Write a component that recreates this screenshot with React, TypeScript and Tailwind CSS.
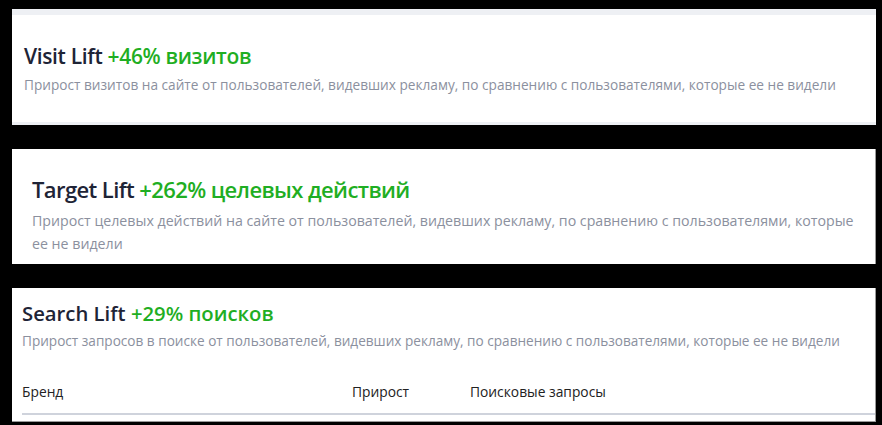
const font = { fontFamily: '"Open Sans", "Noto Sans", sans-serif' };

function LiftCard({ name, value, text }: { name: string; value: string; text: string }) {
  return (
    <>
      <h2 className="text-[21px] leading-[28px] font-semibold tracking-[-0.35px] text-[#1e2436]">
        {name} <span className="text-[#1fae23]">{value}</span>
      </h2>
      <p className="mt-[5px] text-[13.65px] leading-[20px] text-[#8b909e]">{text}</p>
    </>
  );
}

export default function App() {
  return (
    <div className="h-[425px] w-[882px] bg-black overflow-hidden pt-[9px]" style={font}>
      <div className="ml-[12px] w-[864px] h-[116px] bg-white border-t-[6px] border-b-[3px] border-[#eef0f4] px-[12px] pt-[27px]">
        <LiftCard
          name="Visit Lift"
          value="+46% визитов"
          text="Прирост визитов на сайте от пользователей, видевших рекламу, по сравнению с пользователями, которые ее не видели"
        />
      </div>

      <div className="mt-[24px] ml-[12px] w-[864px] h-[115px] bg-white border-r border-[#9a9a9a] px-[20px] pt-[25px]">
        <h2 className="text-[22px] leading-[30px] font-semibold tracking-[-0.6px] text-[#1e2436]">
          Target Lift <span className="text-[#1fae23]">+262% целевых действий</span>
        </h2>
        <p className="mt-[5px] w-[826px] text-[14.2px] leading-[23px] text-[#8b909e]">
          Прирост целевых действий на сайте от пользователей, видевших рекламу, по сравнению с пользователями, которые ее не видели
        </p>
      </div>

      <div className="mt-[24px] ml-[12px] w-[864px] h-[134px] bg-white border-r border-b border-[#9a9a9a] pl-[10px] pt-[12px]">
        <h2 className="text-[20.3px] leading-[26px] font-semibold text-[#1e2436]">
          Search Lift <span className="text-[#1fae23]">+29% поисков</span>
        </h2>
        <p className="mt-[5px] text-[13.6px] leading-[20px] text-[#8b909e]">
          Прирост запросов в поиске от пользователей, видевших рекламу, по сравнению с пользователями, которые ее не видели
        </p>
        <div className="mt-[31px] flex text-[13.8px] leading-[20px] font-medium text-[#222]">
          <div className="w-[330px]">Бренд</div>
          <div className="w-[118px]">Прирост</div>
          <div>Поисковые запросы</div>
        </div>
        <div className="mt-[11px] h-[2px] bg-[#cfd3dc]" />
      </div>
    </div>
  );
}
